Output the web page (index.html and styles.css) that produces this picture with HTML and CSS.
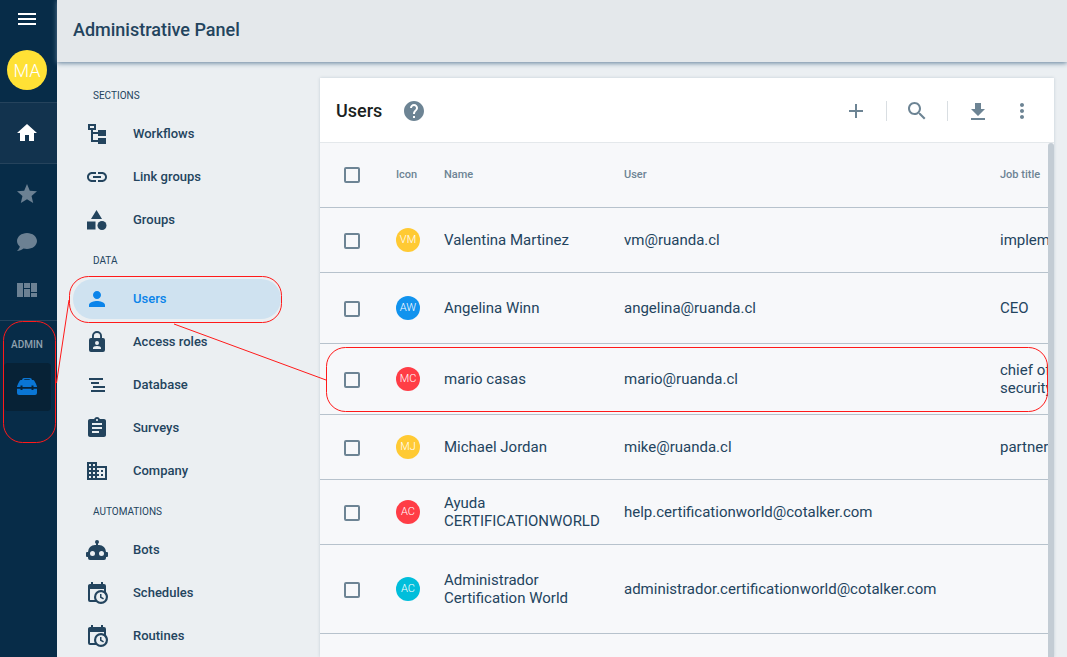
FILE: index.html
```html
<!DOCTYPE html>
<html lang="en">
<head>
<meta charset="utf-8">
<meta name="viewport" content="width=device-width, initial-scale=1">
<title>Administrative Panel</title>
<link rel="stylesheet" href="styles.css">
</head>
<body class="app">
<aside class="rail">
  <button class="rail-menu" aria-label="Menu"><svg class="icon" viewBox="0 0 24 24"><path d="M3 18h18v-2H3v2zm0-5h18v-2H3v2zm0-7v2h18V6H3z"/></svg></button>
  <button class="rail-avatar">MA</button>
  <a class="rail-home" href="#" aria-label="Home"><svg class="icon" viewBox="0 0 24 24"><path d="M10 20v-6h4v6h5v-8h3L12 3 2 12h3v8z"/></svg></a>
  <nav class="rail-links">
    <a class="rail-link" href="#" aria-label="Favorites"><svg class="icon" viewBox="0 0 24 24"><path d="M12 17.27 18.18 21l-1.64-7.03L22 9.24l-7.19-.61L12 2 9.19 8.63 2 9.24l5.46 4.73L5.82 21z"/></svg></a>
    <a class="rail-link" href="#" aria-label="Chat"><svg class="icon" viewBox="0 0 24 24"><path d="M12 3C6.500 3 2 6.580 2 11c0 2.130 1.050 4.070 2.750 5.500C4.750 17.100 4.330 18.670 2 21c2.370-.110 4.640-1 6.470-2.500 1.140.330 2.340.500 3.530.500 5.500 0 10-3.580 10-8s-4.500-8-10-8z"/></svg></a>
    <a class="rail-link" href="#" aria-label="Dashboards"><svg class="icon" viewBox="0 0 24 24"><path d="M2 5h6v14H2zM9 5h6v5H9zM9 11h6v8H9zM16 5h6v9h-6zM16 15h6v4h-6z"/></svg></a>
  </nav>
  <span class="rail-label">ADMIN</span>
  <a class="rail-admin" href="#" aria-label="Administration"><svg class="icon" viewBox="0 0 24 24"><path fill-rule="evenodd" d="M5.500 5H7q.300-2 2-2h6q1.700 0 2 2h1.500Q20 6 22 11.500v.500h-3.500v-1.500h-2V12h-9v-1.500h-2V12H2v-.500Q4 6 5.500 5zM9 5h6l-.500-.800h-5zM2 13.800h3.500V15h2v-1.200h9V15h2v-1.200H22V18q0 2-2 2H4q-2 0-2-2z"/></svg></a>
</aside>

<div class="main">
  <header class="topbar"><h1 class="topbar-title">Administrative Panel</h1></header>
  <div class="content">
    <nav class="side">
      <h2 class="side-label">SECTIONS</h2>
      <a class="side-link" href="#"><svg class="icon" viewBox="0 0 24 24"><path fill-rule="evenodd" d="M3 2h8v6H8v2h5V8h8v6h-8v-2H8v6h5v-2h8v6h-8v-2H6V8H3zM5 4v2h4V4z"/></svg>Workflows</a>
      <a class="side-link" href="#"><svg class="icon" viewBox="0 0 24 24"><path d="M3.900 12c0-1.710 1.390-3.100 3.100-3.100h4V7H7c-2.760 0-5 2.240-5 5s2.240 5 5 5h4v-1.900H7c-1.710 0-3.100-1.390-3.100-3.100zM8 13h8v-2H8v2zm9-6h-4v1.900h4c1.710 0 3.100 1.390 3.100 3.100s-1.390 3.100-3.100 3.100h-4V17h4c2.760 0 5-2.240 5-5s-2.240-5-5-5z"/></svg>Link groups</a>
      <a class="side-link" href="#"><svg class="icon" viewBox="0 0 24 24"><path d="M11.500 2 17 11H6zM2 13.500h8.500v8H2z"/><circle cx="17" cy="17.500" r="4.500"/></svg>Groups</a>
      <h2 class="side-label">DATA</h2>
      <a class="side-link side-link-active" href="#"><svg class="icon" viewBox="0 0 24 24"><path d="M12 12c2.210 0 4-1.790 4-4s-1.790-4-4-4-4 1.790-4 4 1.790 4 4 4zm0 2c-2.670 0-8 1.340-8 4v2h16v-2c0-2.660-5.330-4-8-4z"/></svg>Users</a>
      <a class="side-link" href="#"><svg class="icon" viewBox="0 0 24 24"><path fill-rule="evenodd" d="M18 8h-1V6A5 5 0 0 0 7 6v2H6a2 2 0 0 0-2 2v10a2 2 0 0 0 2 2h12a2 2 0 0 0 2-2V10a2 2 0 0 0-2-2zM8.900 6a3.100 3.100 0 0 1 6.200 0v2H8.900zM12 11a2 2 0 1 1 0 4 2 2 0 0 1 0-4zm4 8H8v-1q0-2 4-2t4 2z"/></svg>Access roles</a>
      <a class="side-link" href="#"><svg class="icon" viewBox="0 0 24 24"><path d="M4 5h14v2H4zM6 9h8v2H6zM8 13h12v2H8zM6 17h14v2H6z"/></svg>Database</a>
      <a class="side-link" href="#"><svg class="icon" viewBox="0 0 24 24"><path d="M19 3h-4.180C14.400 1.840 13.300 1 12 1c-1.300 0-2.400.840-2.820 2H5c-1.100 0-2 .900-2 2v14c0 1.100.900 2 2 2h14c1.100 0 2-.900 2-2V5c0-1.100-.900-2-2-2zm-7 0c.550 0 1 .450 1 1s-.450 1-1 1-1-.450-1-1 .450-1 1-1zm2 14H7v-2h7v2zm3-4H7v-2h10v2zm0-4H7V7h10v2z"/></svg>Surveys</a>
      <a class="side-link" href="#"><svg class="icon" viewBox="0 0 24 24"><path d="M12 7V3H2v18h20V7H12zM6 19H4v-2h2v2zm0-4H4v-2h2v2zm0-4H4V9h2v2zm0-4H4V5h2v2zm4 12H8v-2h2v2zm0-4H8v-2h2v2zm0-4H8V9h2v2zm0-4H8V5h2v2zm10 12h-8v-2h2v-2h-2v-2h2v-2h-2V9h8v10zm-2-8h-2v2h2v-2zm0 4h-2v2h2v-2z"/></svg>Company</a>
      <h2 class="side-label">AUTOMATIONS</h2>
      <a class="side-link" href="#"><svg class="icon" viewBox="0 0 24 24"><path d="M12 2a2 2 0 0 1 2 2c0 .740-.400 1.390-1 1.730V7h1a7 7 0 0 1 7 7h1a1 1 0 0 1 1 1v3a1 1 0 0 1-1 1h-1v1a2 2 0 0 1-2 2H5a2 2 0 0 1-2-2v-1H2a1 1 0 0 1-1-1v-3a1 1 0 0 1 1-1h1a7 7 0 0 1 7-7h1V5.730c-.600-.340-1-.990-1-1.730a2 2 0 0 1 2-2M7.500 13A2.500 2.500 0 0 0 5 15.500 2.500 2.500 0 0 0 7.500 18a2.500 2.500 0 0 0 2.500-2.500A2.500 2.500 0 0 0 7.500 13m9 0a2.500 2.500 0 0 0-2.500 2.500 2.500 2.500 0 0 0 2.500 2.500 2.500 2.500 0 0 0 2.500-2.500 2.500 2.500 0 0 0-2.500-2.500z"/></svg>Bots</a>
      <a class="side-link" href="#"><svg class="icon" viewBox="0 0 24 24"><path d="M15 13h1.500v2.820l2.440 1.410-.750 1.300L15 16.690V13m4-5H5v11h4.670c-.430-.910-.670-1.930-.670-3a7 7 0 0 1 7-7c1.070 0 2.090.240 3 .670V8M5 21a2 2 0 0 1-2-2V5c0-1.110.890-2 2-2h1V1h2v2h8V1h2v2h1a2 2 0 0 1 2 2v6.100c1.240 1.260 2 2.990 2 4.900a7 7 0 0 1-7 7c-1.910 0-3.640-.760-4.900-2H5m11-9.850A4.850 4.850 0 0 0 11.150 16c0 2.680 2.170 4.850 4.850 4.850A4.850 4.850 0 0 0 20.850 16c0-2.680-2.170-4.850-4.850-4.850z"/></svg>Schedules</a>
      <a class="side-link" href="#"><svg class="icon" viewBox="0 0 24 24"><path d="M15 13h1.500v2.820l2.440 1.410-.750 1.300L15 16.690V13m4-5H5v11h4.670c-.430-.910-.670-1.930-.670-3a7 7 0 0 1 7-7c1.070 0 2.090.240 3 .670V8M5 21a2 2 0 0 1-2-2V5c0-1.110.890-2 2-2h1V1h2v2h8V1h2v2h1a2 2 0 0 1 2 2v6.100c1.240 1.260 2 2.990 2 4.900a7 7 0 0 1-7 7c-1.910 0-3.640-.760-4.900-2H5m11-9.850A4.850 4.850 0 0 0 11.150 16c0 2.680 2.170 4.850 4.850 4.850A4.850 4.850 0 0 0 20.850 16c0-2.680-2.170-4.850-4.850-4.850z"/></svg>Routines</a>
    </nav>

    <section class="card">
      <header class="card-head">
        <h2 class="card-title">Users</h2>
        <button class="tool tool-help" aria-label="Help"><svg class="icon" viewBox="0 0 24 24"><path d="M12 2C6.480 2 2 6.480 2 12s4.480 10 10 10 10-4.480 10-10S17.520 2 12 2zm1 17h-2v-2h2v2zm2.070-7.750-.900.920C13.450 12.900 13 13.500 13 15h-2v-.500c0-1.100.450-2.100 1.170-2.830l1.240-1.260c.370-.360.590-.860.590-1.410 0-1.100-.900-2-2-2s-2 .900-2 2H8c0-2.210 1.790-4 4-4s4 1.790 4 4c0 .880-.360 1.680-.930 2.250z"/></svg></button>
        <div class="tools">
          <button class="tool" aria-label="Add"><svg class="icon" viewBox="0 0 24 24"><path d="M19 13h-6v6h-2v-6H5v-2h6V5h2v6h6v2z"/></svg></button>
          <span class="tool-divider"></span>
          <button class="tool" aria-label="Search"><svg class="icon" viewBox="0 0 24 24"><path d="M15.500 14h-.790l-.280-.270C15.410 12.590 16 11.110 16 9.500 16 5.910 13.090 3 9.500 3S3 5.910 3 9.500 5.910 16 9.500 16c1.610 0 3.090-.590 4.230-1.570l.270.280v.790l5 4.990L20.490 19l-4.990-5zm-6 0C7.010 14 5 11.990 5 9.500S7.010 5 9.500 5 14 7.010 14 9.500 11.990 14 9.500 14z"/></svg></button>
          <span class="tool-divider"></span>
          <button class="tool" aria-label="Download"><svg class="icon" viewBox="0 0 24 24"><path d="M19 10h-4V4H9v6H5l7 7 7-7zM5 19v2h14v-2H5z"/></svg></button>
          <button class="tool" aria-label="More"><svg class="icon" viewBox="0 0 24 24"><path d="M12 8c1.100 0 2-.900 2-2s-.900-2-2-2-2 .900-2 2 .900 2 2 2zm0 2c-1.100 0-2 .900-2 2s.900 2 2 2 2-.900 2-2-.900-2-2-2zm0 6c-1.100 0-2 .900-2 2s.900 2 2 2 2-.900 2-2-.900-2-2-2z"/></svg></button>
        </div>
      </header>
      <div class="card-body">
        <div class="table-wrap">
          <table class="users">
            <colgroup><col class="col-check"><col class="col-icon"><col class="col-name"><col class="col-user"><col class="col-job"></colgroup>
            <thead>
              <tr><th><input class="check" type="checkbox" aria-label="Select all"></th><th>Icon</th><th>Name</th><th>User</th><th>Job title</th></tr>
            </thead>
            <tbody>
              <tr><td><input class="check" type="checkbox" aria-label="Select Valentina Martinez"></td><td><span class="badge badge-yellow">VM</span></td><td>Valentina Martinez</td><td>vm@ruanda.cl</td><td>implementer</td></tr>
              <tr class="row-medium"><td><input class="check" type="checkbox" aria-label="Select Angelina Winn"></td><td><span class="badge badge-blue">AW</span></td><td>Angelina Winn</td><td>angelina@ruanda.cl</td><td>CEO</td></tr>
              <tr class="row-medium"><td><input class="check" type="checkbox" aria-label="Select mario casas"></td><td><span class="badge badge-red">MC</span></td><td>mario casas</td><td>mario@ruanda.cl</td><td>chief of security</td></tr>
              <tr><td><input class="check" type="checkbox" aria-label="Select Michael Jordan"></td><td><span class="badge badge-yellow">MJ</span></td><td>Michael Jordan</td><td>mike@ruanda.cl</td><td>partner</td></tr>
              <tr><td><input class="check" type="checkbox" aria-label="Select Ayuda"></td><td><span class="badge badge-red">AC</span></td><td>Ayuda CERTIFICATIONWORLD</td><td>help.certificationworld@cotalker.com</td><td></td></tr>
              <tr class="row-large"><td><input class="check" type="checkbox" aria-label="Select Administrador"></td><td><span class="badge badge-cyan">AC</span></td><td>Administrador Certification World</td><td>administrador.certificationworld@cotalker.com</td><td></td></tr>
            </tbody>
          </table>
        </div>
        <div class="scrollbar"></div>
      </div>
    </section>
  </div>
</div>

<svg class="callouts" width="1067" height="657" viewBox="0 0 1067 657" aria-hidden="true">
  <rect x="3.500" y="321.500" width="52" height="121" rx="19"/>
  <rect x="69.500" y="276.500" width="212" height="46" rx="19"/>
  <rect x="326.500" y="347.500" width="721" height="64" rx="19"/>
  <path d="M56.500 383 69 300M174 324 326 380"/>
</svg>
</body>
</html>
```
FILE: styles.css
```css
* {
  box-sizing: border-box;
}

.app {
  margin: 0;
  height: 100vh;
  display: flex;
  overflow: hidden;
  position: relative;
  background: #ebeff2;
  color: #23445e;
  font-family: Roboto, "Liberation Sans", sans-serif;
}

a {
  color: inherit;
  text-decoration: none;
}

button {
  border: 0;
  padding: 0;
  background: none;
  color: inherit;
  font: inherit;
}

h1,
h2 {
  margin: 0;
}

.icon {
  display: block;
  flex: none;
  width: 24px;
  height: 24px;
  fill: currentColor;
}

/* Left rail */
.rail {
  flex: none;
  width: 57px;
  display: flex;
  flex-direction: column;
  background: #072c48;
  color: #fff;
}

.rail-menu {
  display: flex;
  justify-content: center;
  padding: 7px 0;
  margin-right: 3px;
}

.rail-avatar {
  width: 40px;
  height: 40px;
  margin: 12px 7px;
  border-radius: 50%;
  background: #ffe135;
  font-size: 18px;
  font-weight: 300;
}

.rail-home {
  display: flex;
  align-items: center;
  justify-content: center;
  height: 62px;
  padding-right: 3px;
  border-top: 1px solid #25435c;
  border-bottom: 1px solid #25435c;
  background: #12334e;
}

.rail-links {
  padding: 6px 3px 6px 0;
  border-bottom: 1px solid #25435c;
  color: #6c8193;
}

.rail-link {
  display: flex;
  align-items: center;
  justify-content: center;
  height: 48px;
}

.rail-label {
  padding: 14px 3px 8px 0;
  color: #8fa1af;
  font-size: 10px;
  font-weight: 500;
  line-height: 20px;
  text-align: center;
}

.rail-admin {
  display: flex;
  align-items: center;
  justify-content: center;
  width: 47px;
  height: 48px;
  padding-right: 2px;
  margin-left: 4px;
  border-radius: 4px;
  background: #072236;
  color: #0a76d4;
}

/* Main area */
.main {
  flex: 1;
  min-width: 0;
  display: flex;
  flex-direction: column;
}

.topbar {
  flex: none;
  z-index: 1;
  padding: 20px 16px 22px;
  background: #e4e8eb;
  box-shadow: 0 1px 5px #5d7c98;
}

.topbar-title {
  font-size: 18px;
  font-weight: 500;
  line-height: 20px;
}

.content {
  flex: 1;
  min-height: 0;
  display: flex;
  padding: 16px 13px 0 16px;
}

/* Section navigation */
.side {
  flex: none;
  display: flex;
  flex-direction: column;
  gap: 3px;
  width: 208px;
  margin-right: 39px;
}

.side-label {
  flex: none;
  padding: 2px 20px 0;
  font-size: 10px;
  font-weight: 400;
  line-height: 31px;
}

.side-link {
  flex: none;
  display: flex;
  align-items: center;
  gap: 24px;
  height: 40px;
  padding: 0 12px 2px;
  border-radius: 20px;
  font-size: 13px;
  font-weight: 500;
}

.side-link .icon {
  margin-top: 2px;
}

.side-link-active {
  background: #cfe2f0;
  color: #0a84ea;
}

/* Users card */
.card {
  flex: 1;
  min-width: 0;
  display: flex;
  flex-direction: column;
  background: #f7f8fa;
  box-shadow: 0 0 3px #c3ccd4;
}

.card-head {
  flex: none;
  display: flex;
  align-items: center;
  height: 65px;
  padding: 0 10px 0 16px;
  border-bottom: 1px solid #e4e8eb;
  background: #fff;
}

.card-title {
  color: #1b1f22;
  font-size: 18px;
  font-weight: 500;
}

.tool {
  display: flex;
  align-items: center;
  justify-content: center;
  width: 44px;
  height: 44px;
  color: #6d8494;
}

.tool-help {
  padding-top: 2px;
  margin-left: 10px;
}

.tools {
  display: flex;
  align-items: center;
  padding-top: 2px;
  margin-left: auto;
}

.tool-divider {
  width: 1px;
  height: 20px;
  margin: 0 8px;
  background: #d9dee2;
}

.card-body {
  flex: 1;
  min-height: 0;
  display: flex;
}

.table-wrap {
  flex: 1;
  min-width: 0;
  overflow: hidden;
}

.scrollbar {
  flex: none;
  width: 6px;
  border-radius: 3px 3px 0 0;
  background: #c3ccd4;
}

.users {
  width: max(100%, 800px);
  table-layout: fixed;
  border-collapse: separate;
  border-spacing: 0;
  font-size: 15px;
  line-height: 18px;
}

.col-check {
  width: 76px;
}

.col-icon {
  width: 48px;
}

.col-name {
  width: 180px;
}

.col-user {
  width: 376px;
}

.users th,
.users td {
  height: 65px;
  padding: 0 20px 0 0;
  border-bottom: 1px solid #b7c2cc;
  text-align: left;
  vertical-align: middle;
}

.users th {
  color: #6d8494;
  font-size: 11px;
  font-weight: 500;
}

.users th:first-child {
  padding: 0 0 0 24px;
}

.users td:first-child {
  padding: 2px 0 0 24px;
}

.users th:nth-child(2),
.users td:nth-child(2) {
  padding-right: 0;
}

.users .row-medium td {
  height: 71px;
}

.users .row-large td {
  height: 89px;
}

.check {
  display: block;
  appearance: none;
  width: 16px;
  height: 16px;
  margin: 0;
  border: 2px solid #6d8494;
  border-radius: 2px;
}

.badge {
  display: block;
  width: 24px;
  height: 24px;
  border-radius: 50%;
  color: #fff;
  font-size: 11px;
  font-weight: 300;
  line-height: 24px;
  text-align: center;
}

.badge-yellow {
  background: #ffca33;
}

.badge-blue {
  background: #1193ee;
}

.badge-red {
  background: #ff3d46;
}

.badge-cyan {
  background: #00bedb;
}

/* Highlight outlines drawn over the page */
.callouts {
  position: absolute;
  inset: 0;
  z-index: 2;
  fill: none;
  stroke: #ff1a1a;
  pointer-events: none;
}
```
